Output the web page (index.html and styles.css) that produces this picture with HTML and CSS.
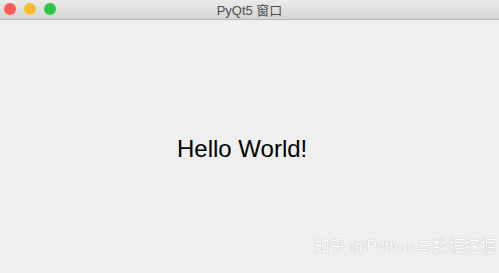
FILE: index.html
```html
<!DOCTYPE html>
<html>
<head>
<meta charset="utf-8">
<link rel="stylesheet" href="styles.css">
</head>
<body>
<div class="window">
  <div class="titlebar">
    <div class="lights">
      <span class="light red"></span>
      <span class="light yellow"></span>
      <span class="light green"></span>
    </div>
    <div class="title">PyQt5 窗口</div>
  </div>
  <div class="content">
    <div class="hello">Hello World!</div>
    <div class="watermark">知乎 @Python与数据挖掘</div>
  </div>
</div>
</body>
</html>
```

FILE: styles.css
```css
html, body {
  margin: 0;
  padding: 0;
  width: 499px;
  height: 273px;
  overflow: hidden;
  background: #efefef;
}
.window {
  width: 499px;
  height: 273px;
  display: flex;
  flex-direction: column;
}
.titlebar {
  height: 19px;
  border-bottom: 1px solid #b4b4b4;
  background: linear-gradient(#ebebeb, #d5d5d5);
  position: relative;
  display: flex;
  align-items: center;
  justify-content: center;
}
.lights {
  position: absolute;
  left: 4px;
  top: 3px;
  display: flex;
  gap: 8px;
}
.light {
  width: 12px;
  height: 12px;
  border-radius: 50%;
  display: block;
}
.red { background: #fc5b57; }
.yellow { background: #fdbc2e; }
.green { background: #28c840; }
.title {
  font-family: "Liberation Sans", "Noto Sans CJK SC", sans-serif;
  font-size: 13px;
  color: #4d4d4d;
}
.content {
  flex: 1;
  position: relative;
  background: #efefef;
}
.hello {
  position: absolute;
  left: 177px;
  top: 115px;
  font-family: "Liberation Sans", sans-serif;
  font-size: 24px;
  color: #000;
}
.watermark {
  position: absolute;
  right: 3px;
  top: 213px;
  white-space: nowrap;
  font-family: "Liberation Sans", "Noto Sans CJK SC", sans-serif;
  font-size: 16px;
  color: #fff;
  text-shadow: 0 0 1px rgba(0,0,0,0.35);
}
```
